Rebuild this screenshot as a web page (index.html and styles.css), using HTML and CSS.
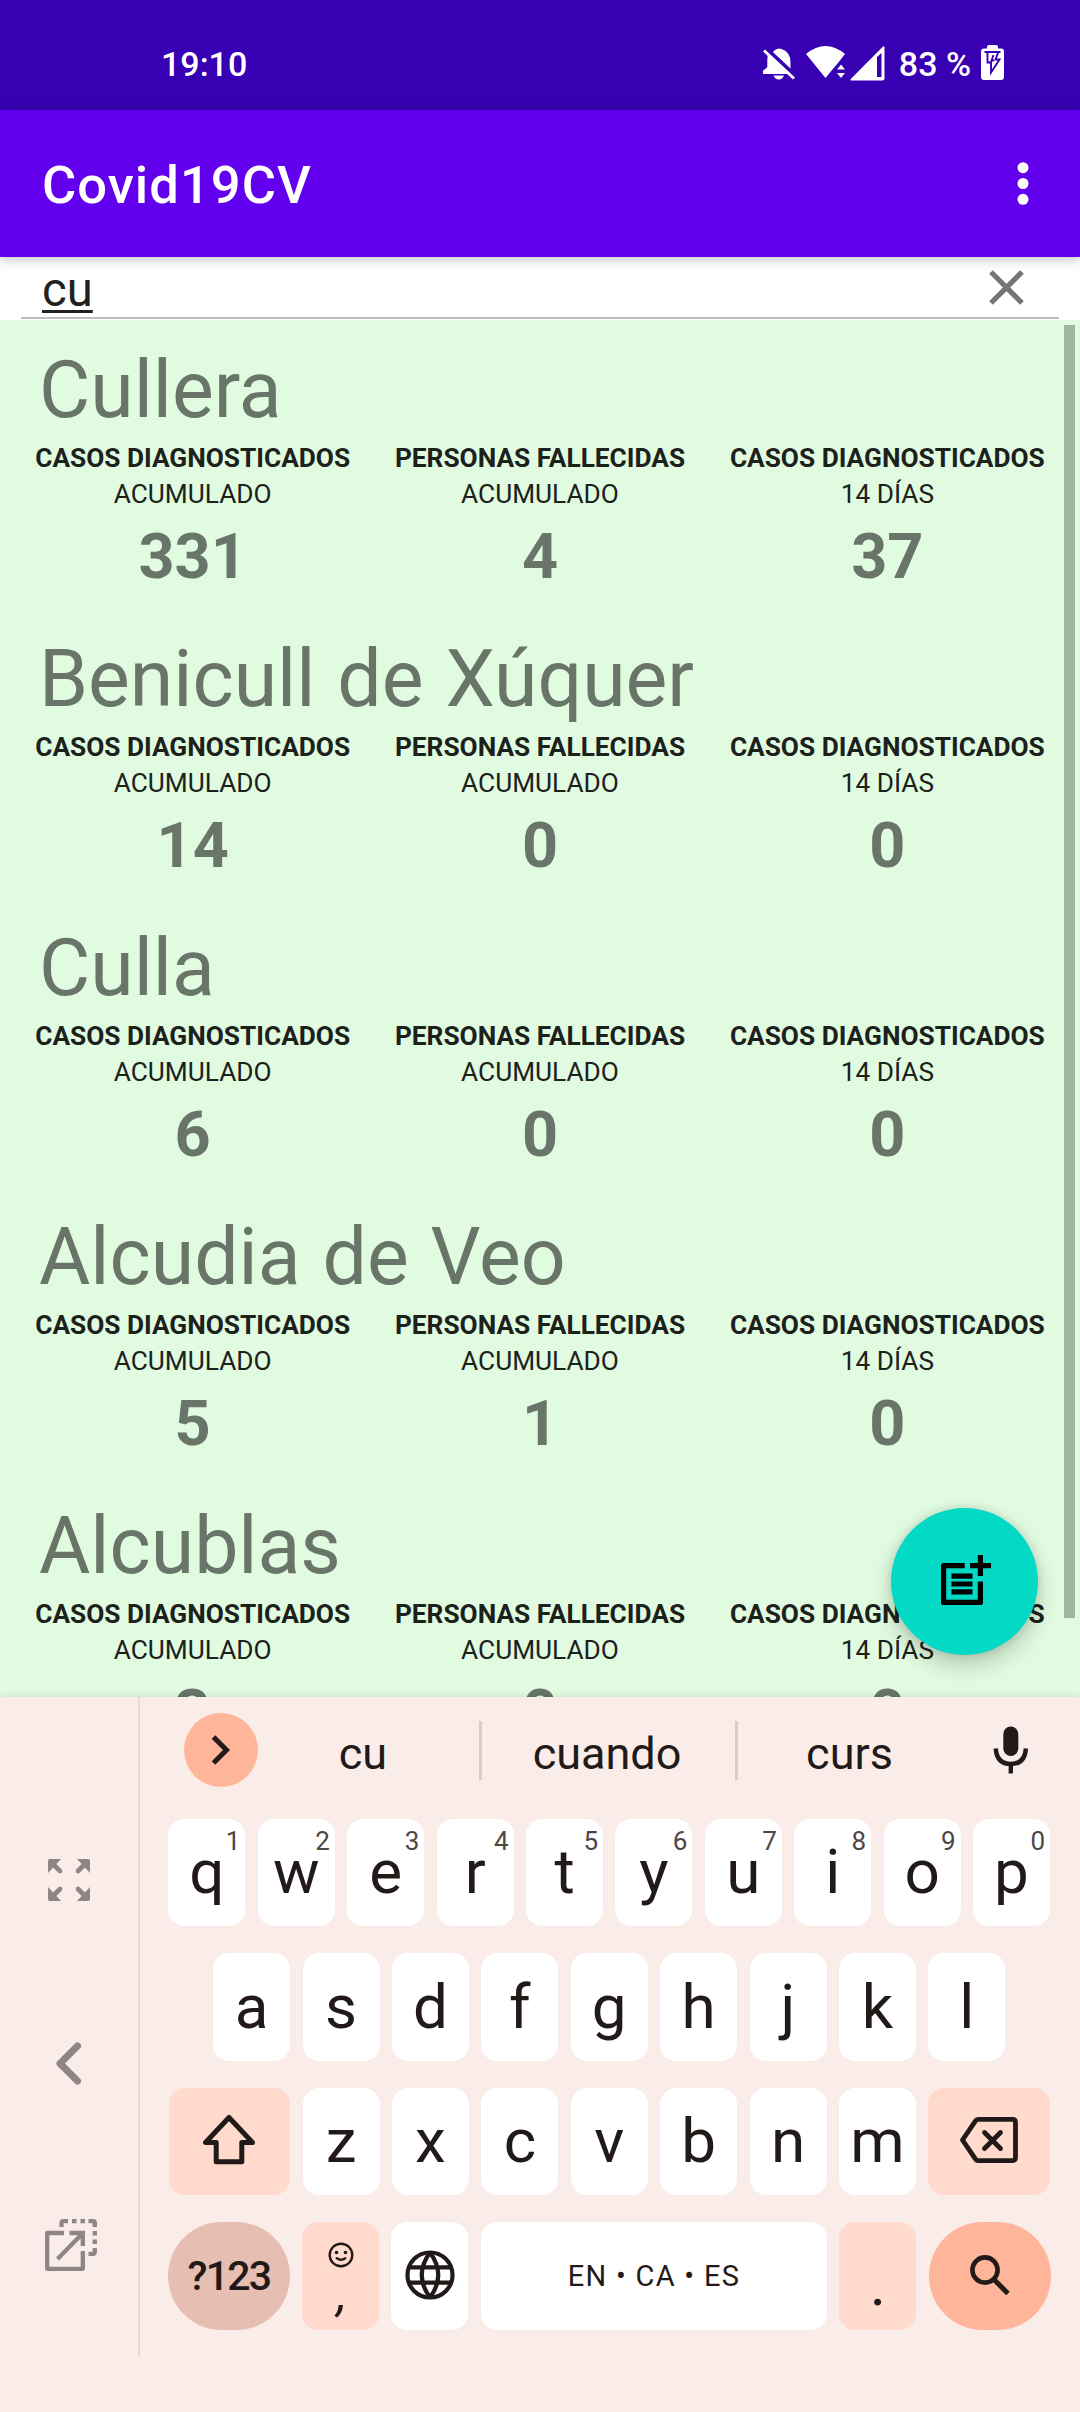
FILE: index.html
```html
<!DOCTYPE html>
<html lang="es">
<head>
<meta charset="utf-8">
<title>Covid19CV</title>
<link rel="stylesheet" href="styles.css">
</head>
<body>
<div class="screen">
  <header class="status-bar">
    <span class="clock">19:10</span>
    <div class="status-icons">
      <svg class="icon-bell" width="32" height="32" viewBox="0 0 32 32">
        <path fill="#fff" d="M5 7L26 26H0v-3.200l4.300-3.600V12Q4.300 9 5 7zM9.800 4Q12 1.200 15.700 0.500 27 2 27.500 14v6.500zM10.500 27.500h10.500q-1.500 4-5.200 4t-5.300-4z"/>
        <path fill="none" stroke="#fff" stroke-width="3" d="M1 2.500l30 28"/>
      </svg>
      <svg class="icon-wifi" width="40" height="34" viewBox="0 0 40 34">
        <path fill="#fff" d="M0 8Q19.500-8 39 8L32 17 26 24 19.500 32z"/>
        <path fill="#3700b3" d="M28 25l7-9.500 5 7v12H30z"/>
        <path fill="#fff" d="M31 23.500h8l-4-5zM31 27h8l-4 5z"/>
      </svg>
      <svg class="icon-signal" width="35" height="35" viewBox="0 0 35 35">
        <path fill="#fff" fill-rule="evenodd" d="M34.500 1v31.500q0 2-2 2H1Q0 33.800 1 32.800L32.500 1Q34-.5 34.500 1zM27 11v20h4.500V7z"/>
      </svg>
      <span class="battery-text">83 %</span>
      <svg class="icon-battery" width="23" height="35" viewBox="0 0 23 35">
        <path fill="#fff" d="M6 3.500V2q0-2 2-2h7q2 0 2 2v1.500h3q3 0 3 3V32q0 3-3 3H3q-3 0-3-3V6.500q0-3 3-3z"/>
        <path fill="none" stroke="#3700b3" stroke-width="1.900" d="M3.500 7h16M6.500 7v10.500h3.500v10l8.500-13h-4L17.300 7M12.500 10l-2 5.500h2.700"/>
      </svg>
    </div>
  </header>

  <div class="app-bar">
    <h1 class="app-title">Covid19CV</h1>
    <svg class="icon-more" width="12" height="43" viewBox="0 0 12 43">
      <g fill="#fff"><circle cx="6" cy="5.700" r="5.500"/><circle cx="6" cy="21.500" r="5.500"/><circle cx="6" cy="37.300" r="5.500"/></g>
    </svg>
  </div>

  <div class="search">
    <div class="search-field">
      <span class="search-text">cu</span>
      <svg width="35" height="35" viewBox="0 0 35 35"><path fill="none" stroke="#757575" stroke-width="5.200" d="M2 2l31 31M33 2L2 33"/></svg>
    </div>
  </div>

  <main class="list">
    <section class="town">
      <h2 class="town-name">Cullera</h2>
      <div class="stats">
        <div class="stat"><b>CASOS DIAGNOSTICADOS</b><span>ACUMULADO</span><strong>331</strong></div>
        <div class="stat"><b>PERSONAS FALLECIDAS</b><span>ACUMULADO</span><strong>4</strong></div>
        <div class="stat"><b>CASOS DIAGNOSTICADOS</b><span>14 DÍAS</span><strong>37</strong></div>
      </div>
    </section>
    <section class="town">
      <h2 class="town-name">Benicull de Xúquer</h2>
      <div class="stats">
        <div class="stat"><b>CASOS DIAGNOSTICADOS</b><span>ACUMULADO</span><strong>14</strong></div>
        <div class="stat"><b>PERSONAS FALLECIDAS</b><span>ACUMULADO</span><strong>0</strong></div>
        <div class="stat"><b>CASOS DIAGNOSTICADOS</b><span>14 DÍAS</span><strong>0</strong></div>
      </div>
    </section>
    <section class="town">
      <h2 class="town-name">Culla</h2>
      <div class="stats">
        <div class="stat"><b>CASOS DIAGNOSTICADOS</b><span>ACUMULADO</span><strong>6</strong></div>
        <div class="stat"><b>PERSONAS FALLECIDAS</b><span>ACUMULADO</span><strong>0</strong></div>
        <div class="stat"><b>CASOS DIAGNOSTICADOS</b><span>14 DÍAS</span><strong>0</strong></div>
      </div>
    </section>
    <section class="town">
      <h2 class="town-name">Alcudia de Veo</h2>
      <div class="stats">
        <div class="stat"><b>CASOS DIAGNOSTICADOS</b><span>ACUMULADO</span><strong>5</strong></div>
        <div class="stat"><b>PERSONAS FALLECIDAS</b><span>ACUMULADO</span><strong>1</strong></div>
        <div class="stat"><b>CASOS DIAGNOSTICADOS</b><span>14 DÍAS</span><strong>0</strong></div>
      </div>
    </section>
    <section class="town">
      <h2 class="town-name">Alcublas</h2>
      <div class="stats">
        <div class="stat"><b>CASOS DIAGNOSTICADOS</b><span>ACUMULADO</span><strong>3</strong></div>
        <div class="stat"><b>PERSONAS FALLECIDAS</b><span>ACUMULADO</span><strong>0</strong></div>
        <div class="stat"><b>CASOS DIAGNOSTICADOS</b><span>14 DÍAS</span><strong>0</strong></div>
      </div>
    </section>
    <div class="scrollbar"></div>
    <button class="fab" aria-label="Añadir">
      <svg width="50" height="50" viewBox="0 0 50 50">
        <path fill="none" stroke="#000" stroke-width="5.200" stroke-linejoin="round" d="M23.700 10.600H2.600v36.800h36.800V26.500"/>
        <path fill="none" stroke="#000" stroke-width="5.200" d="M10.500 21.200h21M10.500 29h21M10.500 36.800h21M39.400 0v21M29 10.600h21"/>
      </svg>
    </button>
  </main>

  <div class="keyboard">
    <aside class="side">
      <svg class="icon-expand" width="42" height="42" viewBox="0 0 42 42">
        <g fill="#8f8583" stroke="#8f8583" stroke-width="4.600" stroke-linecap="round">
          <path stroke="none" d="M2 0h11L0 14V2q0-2 2-2zM40 0H29L42 14V2q0-2-2-2zM2 42h11L0 28V40q0 2 2 2zM40 42H29L42 28V40q0 2-2 2z"/>
          <path d="M5 5l7 7M37 5l-7 7M5 37l7-7M37 37l-7-7"/>
        </g>
      </svg>
      <svg class="icon-back" width="26" height="43" viewBox="0 0 26 43"><path fill="none" stroke="#8f8583" stroke-width="7" stroke-linecap="round" stroke-linejoin="round" d="M21.500 4L4 21.500 21.500 39"/></svg>
      <svg class="icon-float" width="52" height="52" viewBox="0 0 52 52">
        <g fill="none" stroke="#8f8583" stroke-width="4.300">
          <path stroke-linejoin="round" d="M19 14H2.200v35.800h35.600V32"/>
          <path d="M24.500 14h13.300v13M36 16L12.500 40"/>
          <path d="M16.500 8V4q0-1.800 1.800-1.800H23M27 2.200h4.500M35.500 2.200H40M43.500 2.200h4.500q1.800 0 1.800 1.800v4M49.800 12v4.500M49.800 20.500V25M49.800 29v4q0 1.800-1.800 1.800h-4.500"/>
        </g>
      </svg>
    </aside>

    <div class="board">
      <div class="suggestions">
        <div class="expand"><svg width="20" height="32" viewBox="0 0 20 32"><path fill="none" stroke="#211a18" stroke-width="5" d="M2.500 3L15.500 16l-13 13"/></svg></div>
        <span class="word word-first">cu</span>
        <span class="word word-mid">cuando</span>
        <span class="word word-last">curs</span>
        <svg class="icon-mic" width="36" height="48" viewBox="0 0 36 48">
          <rect x="10.300" y="0.500" width="15" height="29.500" rx="7.500" fill="#211a18"/>
          <path fill="none" stroke="#211a18" stroke-width="4.400" d="M2.700 22.500q1 15.500 15.100 15.500t15.100-15.500M17.800 38v9.500"/>
        </svg>
      </div>

      <div class="row">
        <div class="key">q<sup>1</sup></div><div class="key">w<sup>2</sup></div><div class="key">e<sup>3</sup></div><div class="key">r<sup>4</sup></div><div class="key">t<sup>5</sup></div><div class="key">y<sup>6</sup></div><div class="key">u<sup>7</sup></div><div class="key">i<sup>8</sup></div><div class="key">o<sup>9</sup></div><div class="key">p<sup>0</sup></div>
      </div>
      <div class="row">
        <div class="key">a</div><div class="key">s</div><div class="key">d</div><div class="key">f</div><div class="key">g</div><div class="key">h</div><div class="key">j</div><div class="key">k</div><div class="key">l</div>
      </div>
      <div class="row">
        <div class="key wide tint">
          <svg width="52" height="52" viewBox="0 0 52 52"><path fill="none" stroke="#211a18" stroke-width="5" stroke-linejoin="round" d="M26 3.500L2.500 28.500h10.700v19.300h25.600V28.500h10.700z"/></svg>
        </div>
        <div class="key">z</div><div class="key">x</div><div class="key">c</div><div class="key">v</div><div class="key">b</div><div class="key">n</div><div class="key">m</div>
        <div class="key wide tint">
          <svg width="58" height="46" viewBox="0 0 58 46"><path fill="none" stroke="#211a18" stroke-width="4.800" stroke-linejoin="round" d="M18 2.400h34.500q3 0 3 3v35.200q0 3-3 3H18q-1.500 0-2.500-1.500L2.500 23 15.500 3.900q1-1.500 2.500-1.500z"/><path stroke="#211a18" stroke-width="4.800" stroke-linecap="round" d="M24.500 15.500l16 16M40.500 15.500l-16 16"/></svg>
        </div>
      </div>
      <div class="row">
        <div class="key wide pill symbols">?123</div>
        <div class="key tint comma">
          <svg width="26" height="26" viewBox="0 0 26 26"><circle cx="13" cy="13" r="11.300" fill="none" stroke="#211a18" stroke-width="2.400"/><circle cx="8.500" cy="10.500" r="1.800" fill="#211a18"/><circle cx="17.500" cy="10.500" r="1.800" fill="#211a18"/><path fill="none" stroke="#211a18" stroke-width="2.400" stroke-linecap="round" d="M8.800 16.200q4.200 3 8.400 0"/></svg>
          <span>,</span>
        </div>
        <div class="key">
          <svg width="50" height="50" viewBox="0 0 50 50"><g fill="none" stroke="#211a18" stroke-width="4.200"><circle cx="25" cy="25" r="22.500"/><path d="M4 17.300h42M4 32.700h42M25 2.500q-16.500 22.500 0 45M25 2.500q16.500 22.500 0 45"/></g></svg>
        </div>
        <div class="key space">EN • CA • ES</div>
        <div class="key tint period">.</div>
        <div class="key wide pill go">
          <svg width="40" height="40" viewBox="0 0 40 40"><circle cx="15" cy="15" r="12.600" fill="none" stroke="#211a18" stroke-width="4.600"/><path stroke="#211a18" stroke-width="5" d="M24.500 25l13.500 13.500"/></svg>
        </div>
      </div>
    </div>
  </div>
</div>
</body>
</html>
```
FILE: styles.css
```css
* { box-sizing: border-box; }

body {
  margin: 0;
  background: #faece8;
  font-family: Roboto, "Liberation Sans", sans-serif;
}

svg { display: block; flex: none; }

.screen {
  display: flex;
  flex-direction: column;
  width: 1080px;
  height: 2412px;
  overflow: hidden;
}

/* Status bar */
.status-bar {
  display: flex;
  justify-content: space-between;
  height: 110px;
  padding: 45px 76px 0 161px;
  background: #3700b3;
  color: #fff;
  font-size: 34px;
  font-weight: 500;
  line-height: 38px;
}
.status-icons { display: flex; align-items: flex-start; }
.icon-bell { margin-top: 3px; margin-right: 11px; }
.icon-wifi { margin-top: 1px; margin-right: 4px; }
.icon-signal { margin-top: 1px; margin-right: 14px; }
.battery-text { margin-right: 10px; white-space: nowrap; }

/* App bar */
.app-bar {
  display: flex;
  align-items: center;
  justify-content: space-between;
  height: 147px;
  padding: 0 51px 0 42px;
  background: #6200ee;
  box-shadow: 0 2px 12px rgba(0, 0, 0, 0.25);
  position: relative;
}
.app-title {
  margin: 3px 0 0;
  color: #fff;
  font-size: 52.5px;
  font-weight: 500;
  letter-spacing: 1.05px;
}

/* Search */
.search {
  height: 63px;
  padding: 0 21px 1px;
  background: #fff;
}
.search-field {
  display: flex;
  align-items: center;
  justify-content: space-between;
  height: 62px;
  padding: 0 35px 0 21px;
  border-bottom: 2px solid #bdbdbd;
}
.search-text {
  padding-top: 6px;
  color: #212121;
  font-size: 47.25px;
  line-height: 56px;
  text-decoration: underline;
  text-decoration-thickness: 2.5px;
  text-underline-offset: 4px;
  text-decoration-skip-ink: none;
}

/* Results */
.list {
  position: relative;
  height: 1377px;
  overflow: hidden;
  background: #e0fbe0;
}
.town {
  height: 289px;
  padding: 24px 19px 0;
}
.town-name {
  margin: 0 0 4px 20px;
  color: #687568;
  font-size: 78.75px;
  font-weight: 400;
  line-height: 92px;
  word-spacing: 2.4px;
}
.stats {
  display: grid;
  grid-template-columns: repeat(3, 1fr);
}
.stat {
  display: flex;
  flex-direction: column;
  align-items: center;
  color: #1c211c;
  font-size: 26.25px;
  line-height: 36px;
  white-space: nowrap;
}
.stat span { font-weight: 400; }
.stat strong {
  margin-top: 7px;
  color: #687568;
  font-size: 63px;
  line-height: 76px;
}
.scrollbar {
  position: absolute;
  top: 5px;
  right: 5px;
  width: 11px;
  height: 1293px;
  background: #a1b4a1;
}
.fab {
  position: absolute;
  top: 1188px;
  left: 891px;
  display: flex;
  align-items: center;
  justify-content: center;
  width: 147px;
  height: 147px;
  padding: 0 0 3px 3px;
  border: 0;
  border-radius: 50%;
  background: #03dac6;
  box-shadow: 0 10px 22px rgba(0, 0, 0, 0.2), 0 0 8px rgba(0, 0, 0, 0.12);
}

/* Keyboard */
.keyboard {
  position: relative;
  display: flex;
  height: 715px;
  background: #faece8;
  color: #211a18;
  box-shadow: 0 0 8px rgba(0, 0, 0, 0.12);
}
.side {
  display: flex;
  flex-direction: column;
  align-items: center;
  width: 140px;
  height: 660px;
  padding-top: 162px;
  border-right: 2px solid #e6d9d6;
}
.icon-back { margin-top: 141px; }
.icon-float { margin-top: 134px; margin-left: 4px; }

.board {
  display: flex;
  flex-direction: column;
  gap: 27px;
  width: 940px;
  padding: 16px 29.500px 0 28px;
}
.suggestions {
  display: flex;
  align-items: flex-start;
  height: 79px;
  padding-left: 15.500px;
}
.expand {
  display: flex;
  align-items: center;
  justify-content: center;
  width: 74px;
  height: 74px;
  border-radius: 50%;
  background: #ffb599;
}
.word {
  height: 59px;
  margin-top: 8px;
  padding-top: 3px;
  border-right: 3px solid #d9ccc9;
  font-size: 45px;
  line-height: 59px;
  text-align: center;
}
.word-first { width: 224px; padding-right: 10px; }
.word-mid { width: 256px; padding-right: 2px; }
.word-last { width: 226px; padding-right: 2px; border: 0; }
.icon-mic { margin-top: 13px; margin-left: 29px; }

.row {
  display: flex;
  justify-content: center;
  gap: 12.400px;
  height: 107.400px;
}
.key {
  position: relative;
  display: flex;
  align-items: center;
  justify-content: center;
  flex: none;
  width: 77px;
  padding-bottom: 2px;
  border-radius: 16px;
  background: #fff;
  font-size: 62px;
  line-height: 103px;
}
.key sup {
  position: absolute;
  top: 7px;
  right: 5px;
  color: #4d4644;
  font-size: 26px;
  line-height: 30px;
}
.wide { width: 121.700px; }
.tint { background: #ffdacd; }
.pill { border-radius: 54px; }
.symbols {
  padding-top: 3px;
  background: #e7beb2;
  font-size: 41px;
  font-weight: 500;
  letter-spacing: -1.800px;
}
.comma {
  flex-direction: column;
  justify-content: flex-start;
  padding-top: 20px;
}
.comma span {
  margin-left: 3px;
  font-size: 50px;
  font-style: italic;
  line-height: 50px;
}
.space {
  flex: 1;
  padding-top: 4px;
  font-size: 29px;
  letter-spacing: 1.300px;
}
.period { padding-top: 18px; }
.go { background: #ffb599; }
```
